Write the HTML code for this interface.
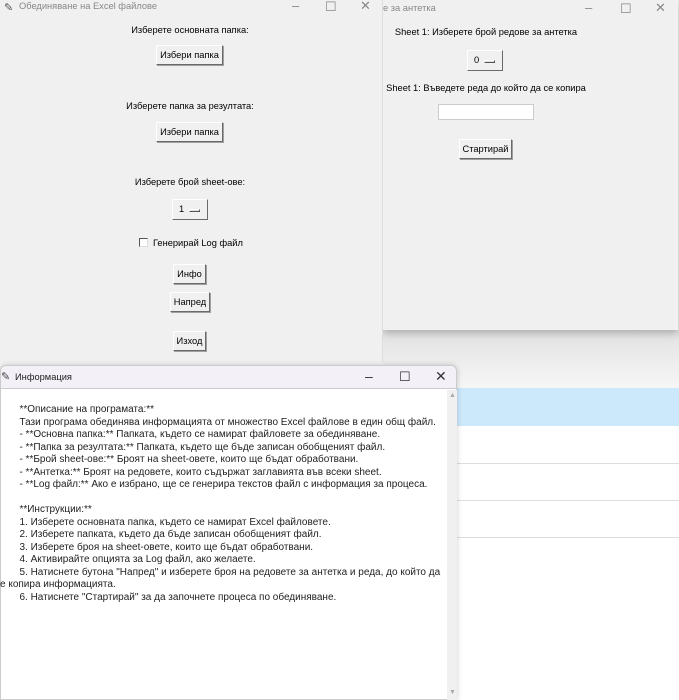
<!DOCTYPE html>
<html><head><meta charset="utf-8"><style>
*{margin:0;padding:0;box-sizing:border-box}
body{width:679px;height:700px;overflow:hidden;background:#f3f3f3;font-family:"Liberation Sans",Arial,sans-serif;position:relative;font-size:11px;color:#000}
.abs{position:absolute}
.win{position:absolute;background:#f0f0f0}
.btn{position:absolute;background:#f0f0f0;border:1px solid #fff;border-right:1px solid #6a6a6a;border-bottom:1px solid #6a6a6a;box-shadow:1px 1px 0 #a0a0a0;font-size:9.3px;text-align:center;display:flex;align-items:center;justify-content:center}
.lbl{position:absolute;font-size:9.3px;white-space:nowrap;transform:translateX(-50%)}
.ctl{position:absolute;color:#888;font-size:13px}
.opt{position:absolute;background:#f0f0f0;border:1px solid #fff;border-right:1px solid #6a6a6a;border-bottom:1px solid #6a6a6a;font-size:9.3px}
.opt span{position:absolute;left:6px;top:4px}
.opt i{position:absolute;right:7px;top:9px;width:11px;height:3px;border:1px solid #555;border-top-color:#fff;border-left-color:#fff;background:#ddd}
.info p{white-space:pre;line-height:12.5px;font-size:10px;color:#222}
</style></head><body>
<div class="abs" style="left:383px;top:330px;width:296px;height:58px;background:linear-gradient(#e2e2e2,#f6f6f6)"></div>
<div class="abs" style="left:383px;top:388px;width:296px;height:312px;background:#fff"></div>
<div class="abs" style="left:456px;top:388px;width:223px;height:38px;background:#cce8fb"></div>
<div class="abs" style="left:456px;top:463px;width:223px;height:1px;background:#ddd"></div>
<div class="abs" style="left:456px;top:500px;width:223px;height:1px;background:#ddd"></div>
<div class="abs" style="left:456px;top:537px;width:223px;height:1px;background:#ddd"></div>

<div class="win" style="left:383px;top:0;width:295px;height:330px;box-shadow:0 3px 8px rgba(0,0,0,.25)">
  <div class="abs" style="left:0;top:3px;font-size:9.3px;color:#888">е за антетка</div>
  <div class="ctl" style="left:202px;top:0">–</div>
  <div class="ctl" style="left:237px;top:1px">☐</div>
  <div class="ctl" style="left:272px;top:0">✕</div>
  <div class="lbl" style="left:103px;top:27px">Sheet 1: Изберете брой редове за антетка</div>
  <div class="opt" style="left:84px;top:50px;width:36px;height:21px"><span>0</span><i></i></div>
  <div class="lbl" style="left:103px;top:83px">Sheet 1: Въведете реда до който да се копира</div>
  <div class="abs" style="left:55px;top:104px;width:96px;height:16px;background:#fff;border:1px solid #ccc"></div>
  <div class="btn" style="left:76px;top:139px;width:53px;height:20px">Стартирай</div>
</div>

<div class="win" style="left:0;top:0;width:383px;height:362px;border-right:1px solid #ddd">
  <div class="abs" style="left:4px;top:1px;font-size:11px;color:#555">✎</div>
  <div class="abs" style="left:19px;top:1px;font-size:9.3px;color:#888">Обединяване на Excel файлове</div>
  <div class="ctl" style="left:292px;top:-2px">–</div>
  <div class="ctl" style="left:325px;top:-1px">☐</div>
  <div class="ctl" style="left:360px;top:-2px">✕</div>
  <div class="lbl" style="left:190px;top:25px">Изберете основната папка:</div>
  <div class="btn" style="left:156px;top:45px;width:67px;height:20px">Избери папка</div>
  <div class="lbl" style="left:190px;top:101px">Изберете папка за резултата:</div>
  <div class="btn" style="left:156px;top:122px;width:67px;height:20px">Избери папка</div>
  <div class="lbl" style="left:190px;top:177px">Изберете брой sheet-ове:</div>
  <div class="opt" style="left:172px;top:199px;width:36px;height:21px"><span>1</span><i></i></div>
  <div class="abs" style="left:139px;top:238px;width:9px;height:9px;border:1px solid #555;border-right-color:#ddd;border-bottom-color:#ddd;background:#fff"></div>
  <div class="abs" style="left:153px;top:238px;font-size:9.3px">Генерирай Log файл</div>
  <div class="btn" style="left:173px;top:264px;width:33px;height:20px">Инфо</div>
  <div class="btn" style="left:170px;top:292px;width:40px;height:20px">Напред</div>
  <div class="btn" style="left:173px;top:331px;width:33px;height:20px">Изход</div>
</div>

<div class="abs info" style="left:0;top:365px;width:457px;height:335px;background:#fff;border:1px solid #ccc;border-radius:6px 6px 0 0;box-shadow:0 0 6px rgba(0,0,0,.2)">
  <div class="abs" style="left:0;top:0;width:455px;height:23px;background:#f3f0f7;border-bottom:1px solid #ccc;border-radius:6px 6px 0 0"></div>
  <div class="abs" style="left:0;top:4px;font-size:11px;color:#444">✎</div>
  <div class="abs" style="left:14px;top:6px;font-size:9.3px;color:#222">Информация</div>
  <div class="abs" style="left:364px;top:2px;font-size:14px;color:#333">–</div>
  <div class="abs" style="left:398px;top:3px;font-size:13px;color:#333">☐</div>
  <div class="abs" style="left:434px;top:2px;font-size:14px;color:#333">✕</div>
  <div class="abs" style="left:446px;top:24px;width:10px;height:310px;background:#f0f0f0"></div>
  <div class="abs" style="left:448px;top:26px;font-size:7px;color:#aaa">▲</div>
  <div class="abs" style="left:448px;top:323px;font-size:7px;color:#aaa">▼</div>
  <p class="abs" style="left:-1px;top:38px">       **Описание на програмата:**
       Тази програма обединява информацията от множество Excel файлове в един общ файл.
       - **Основна папка:** Папката, където се намират файловете за обединяване.
       - **Папка за резултата:** Папката, където ще бъде записан обобщеният файл.
       - **Брой sheet-ове:** Броят на sheet-овете, които ще бъдат обработвани.
       - **Антетка:** Броят на редовете, които съдържат заглавията във всеки sheet.
       - **Log файл:** Ако е избрано, ще се генерира текстов файл с информация за процеса.

       **Инструкции:**
       1. Изберете основната папка, където се намират Excel файловете.
       2. Изберете папката, където да бъде записан обобщеният файл.
       3. Изберете броя на sheet-овете, които ще бъдат обработвани.
       4. Активирайте опцията за Log файл, ако желаете.
       5. Натиснете бутона "Напред" и изберете броя на редовете за антетка и реда, до който да
е копира информацията.
       6. Натиснете "Стартирай" за да започнете процеса по обединяване.</p>
</div>
</body></html>
